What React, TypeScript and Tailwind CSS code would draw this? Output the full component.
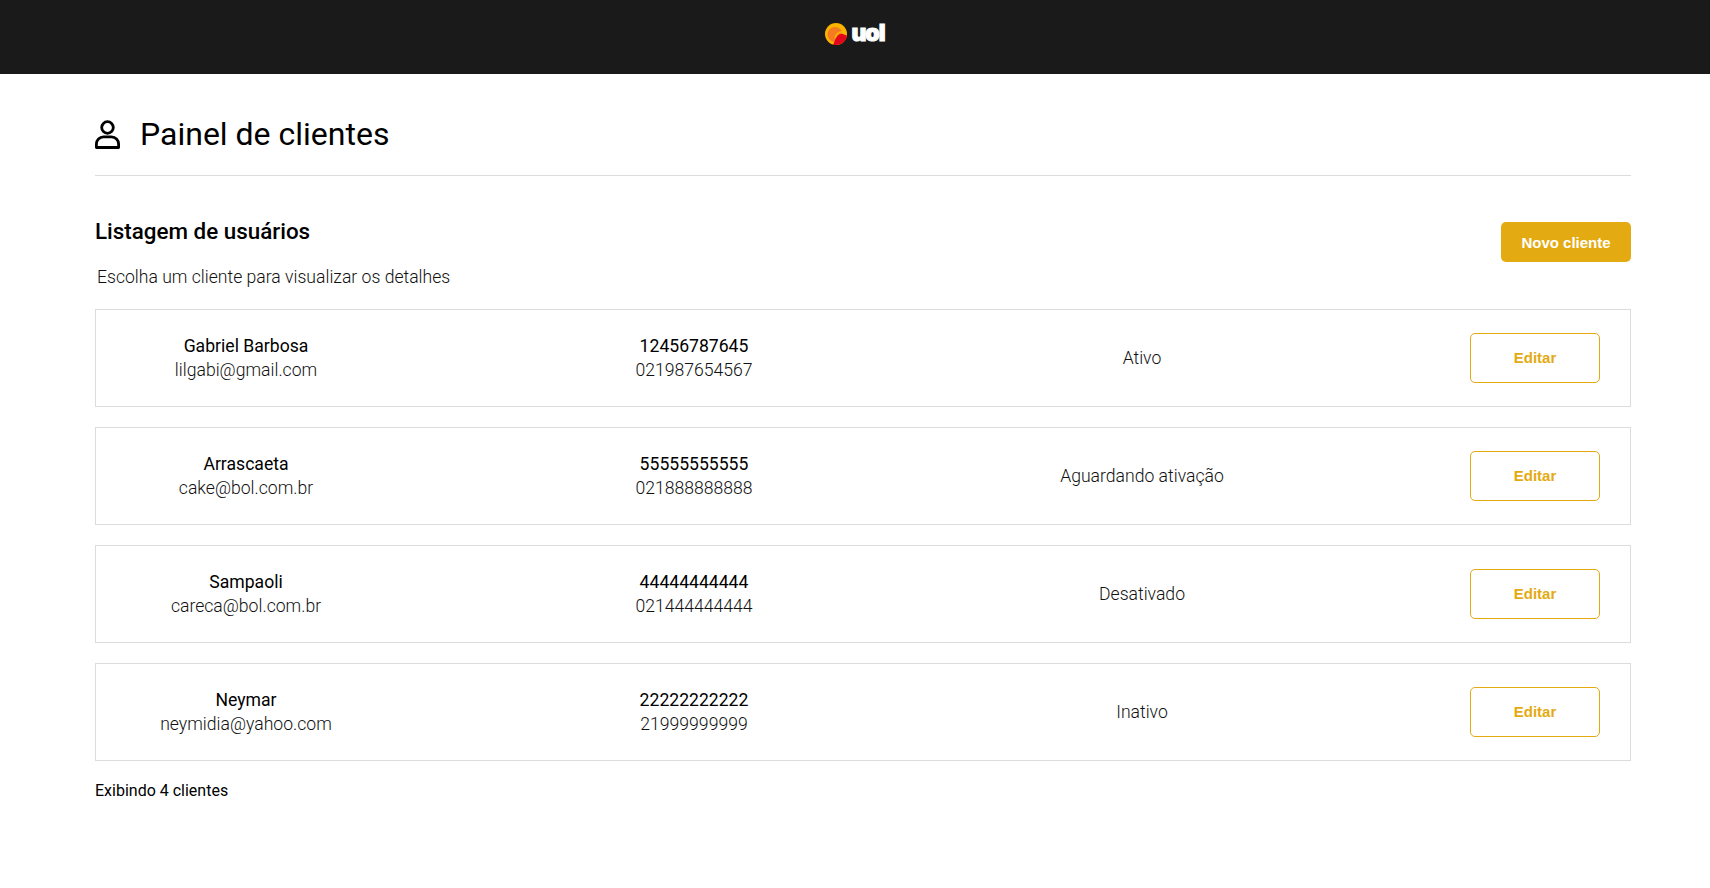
import React from "react";

const clients = [
  { name: "Gabriel Barbosa", email: "lilgabi@gmail.com", cpf: "12456787645", phone: "021987654567", status: "Ativo" },
  { name: "Arrascaeta", email: "cake@bol.com.br", cpf: "55555555555", phone: "021888888888", status: "Aguardando ativação" },
  { name: "Sampaoli", email: "careca@bol.com.br", cpf: "44444444444", phone: "021444444444", status: "Desativado" },
  { name: "Neymar", email: "neymidia@yahoo.com", cpf: "22222222222", phone: "21999999999", status: "Inativo" },
];

const Logo = () => (
  <div className="flex items-center">
    <svg width="22" height="22" viewBox="0 0 22 22">
      <circle cx="11" cy="11" r="11" fill="#fbb400" />
      <circle cx="10" cy="11.5" r="7.5" fill="#f47b20" />
      <path d="M8 22 C10 18 11 12 16 11 C18.5 10.6 20.5 11.5 22 13 C21 18 16.5 22 11 22 C10 22 9 22 8 22Z" fill="#e3051b" />
      <path d="M10 15 C11 11 14 8.5 17 9 C18.5 9.3 19.5 10.2 20 11.5" fill="none" stroke="#fbb400" strokeWidth="1.6" />
    </svg>
    <span className="ml-[4px] font-['Inter',sans-serif] text-[23px] leading-none font-black tracking-[-1px] text-white [-webkit-text-stroke:1px_#fff]">uol</span>
  </div>
);

const UserIcon = () => (
  <svg width="25" height="29" viewBox="0 0 25 29" fill="none" stroke="#000" strokeWidth="2.8">
    <circle cx="12.5" cy="7.5" r="5.8" />
    <path d="M1.4 27.5 V24 C1.4 20 4.5 16.8 8.5 16.8 H16.5 C20.5 16.8 23.6 20 23.6 24 V27.5 Z" strokeLinejoin="round" />
  </svg>
);

export default function App() {
  return (
    <div className="min-h-[888px] bg-white font-['Roboto',sans-serif] text-black">
      <header className="flex h-[74px] items-center justify-center bg-[#1a1a1a] pb-[7px]">
        <Logo />
      </header>
      <main className="pl-[95px] pr-[79px]">
        <div className="flex h-[102px] items-center gap-[20px] border-b border-[#dcdcdc] pt-[20px]">
          <UserIcon />
          <h1 className="pb-[2px] text-[32px] leading-none font-normal">Painel de clientes</h1>
        </div>
        <div className="mt-[46px] flex items-start justify-between">
          <div>
            <h2 className="text-[22.4px] leading-[18px] font-medium">Listagem de usuários</h2>
            <p className="mt-[26px] ml-[2px] text-[17.6px] leading-[22px] font-light text-[#111]">Escolha um cliente para visualizar os detalhes</p>
          </div>
          <button className="h-[40px] w-[130px] rounded-[5px] bg-[#e4aa12] pt-[2px] font-['Liberation_Sans',sans-serif] text-[15px] font-bold text-white">
            Novo cliente
          </button>
        </div>
        <div className="mt-[21px] flex flex-col gap-5">
          {clients.map((c) => (
            <div key={c.cpf} className="grid h-[98px] grid-cols-[300px_300px_300px_1fr] items-center gap-x-[148px] border border-[#dcdcdc] pr-[30px] text-center text-[17.6px] leading-[24px]">
              <div>
                <div className="font-normal">{c.name}</div>
                <div className="font-light text-[#111]">{c.email}</div>
              </div>
              <div>
                <div className="font-normal">{c.cpf}</div>
                <div className="font-light text-[#111]">{c.phone}</div>
              </div>
              <div className="font-light text-[#111]">{c.status}</div>
              <button className="h-[50px] w-[130px] justify-self-end rounded-[5px] border border-[#e4aa12] bg-white font-['Liberation_Sans',sans-serif] text-[15px] font-bold text-[#e4aa12]">
                Editar
              </button>
            </div>
          ))}
        </div>
        <p className="mt-[20px] text-[16px] leading-[20px]">Exibindo 4 clientes</p>
      </main>
    </div>
  );
}
